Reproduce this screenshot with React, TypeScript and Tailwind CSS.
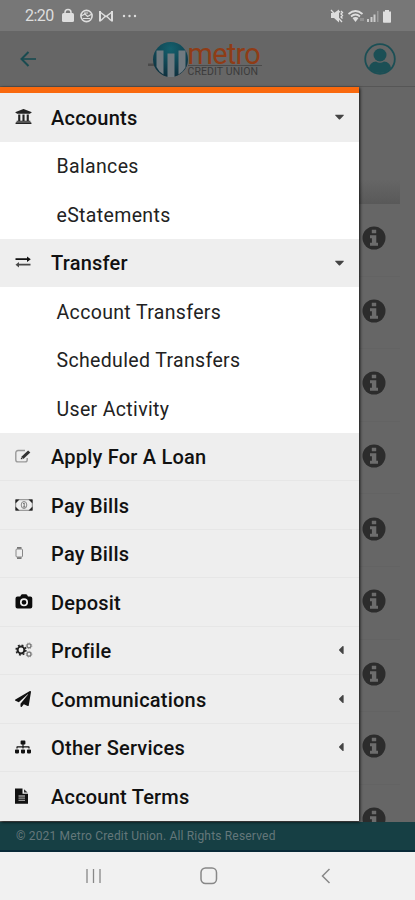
import React from "react";
import {
	FaCaretDown,
	FaCaretLeft,
	FaPaperPlane,
	FaSitemap,
	FaUniversity,
} from "react-icons/fa";
import clsx from "clsx";

interface MenuItem {
	label: string;
	icon?: React.ReactNode;
	caret?: 'down'|'left';
	sub?: boolean;
	line?: boolean;
}

const ExchangeIcon = () => (
	<svg width="17" height="14" viewBox="0 0 17 14" fill="currentColor">
		<path d="M.5 3.300h11.500V1.600L15.800 4.300 12 7V5.100H.5z" />
		<path d="M15.500 8.700H4V7L.5 9.700 4 12.400v-1.900h11.500z" opacity=".75" />
	</svg>
)

const EditIcon = () => (
	<svg width="17" height="15" viewBox="0 0 17 15" fill="none">
		<path d="M10 1.500H3A2.200 2.200 0 0 0 .8 3.700v7A2.200 2.200 0 0 0 3 12.900h7a2.200 2.200 0 0 0 2.200-2.200V9" stroke="#999" strokeWidth="1.400" />
		<path d="M5.800 10.300l.3-2.300 7-6.500 2.200 2-6.900 6.400z" fill="#333" />
		<path d="M6.500 8.300l1.500 1.500" stroke="#eee" strokeWidth=".9" />
	</svg>
)

const MoneyIcon = () => (
	<svg width="18" height="12" viewBox="0 0 18 12" fill="none">
		<path d="M.7.700h16.600v10.600H.7z" strokeWidth="1" stroke="#888" />
		<path d="M.5.500h4L.5 4.500zM17.500.500h-4l4 4zM.5 11.500h4l-4-4zM17.500 11.500h-4l4-4z" fill="#222" />
		<ellipse cx="9" cy="6" rx="2.800" ry="3.500" stroke="#888" />
		<path d="M8 4.700l1.200-.7v4M7.800 8h2.700" stroke="#666" strokeWidth=".9" />
	</svg>
)

const WatchIcon = () => (
	<svg width="10" height="14" viewBox="0 0 10 14" fill="none" stroke="#888">
		<rect x="1" y="3" width="6.500" height="8" rx="1" />
		<path d="M2 1.800h4.500M2 12.200h4.500" strokeWidth="1.800" stroke="#777" />
	</svg>
)

const CameraIcon = () => (
	<svg width="18" height="15" viewBox="0 0 18 15">
		<path d="M2.500 2.500h2.700L6.200.8Q6.500.300 7.200.300h3.800q.7 0 1 .5l1 1.700h2.300q2 0 2 2v8q0 2-2 2H2.500q-2 0-2-2v-8q0-2 2-2z" fill="#0b0b0b" />
		<circle cx="9" cy="8.300" r="3.200" fill="none" stroke="#eee" strokeWidth="1.700" />
	</svg>
)

const CogsIcon = () => (
	<svg width="18" height="16" viewBox="0 0 18 16" fill="none">
		<circle cx="6" cy="8" r="3.400" stroke="#222" strokeWidth="2" />
		<circle cx="6" cy="8" r="4.900" stroke="#222" strokeWidth="1.500" strokeDasharray="1.900 1.950" />
		<circle cx="14" cy="3.800" r="2" stroke="#777" strokeWidth="1.300" />
		<circle cx="14" cy="3.800" r="2.900" stroke="#888" strokeWidth=".8" strokeDasharray="1.100 1.180" />
		<circle cx="14" cy="12.200" r="2" stroke="#777" strokeWidth="1.300" />
		<circle cx="14" cy="12.200" r="2.900" stroke="#888" strokeWidth=".8" strokeDasharray="1.100 1.180" />
	</svg>
)

const DocIcon = () => (
	<svg width="14" height="16" viewBox="0 0 14 16">
		<path d="M0 .5h7.500v5.300h5.500v10H0z" fill="#111" />
		<path d="M9 1.200l3.600 3.400H9z" fill="#333" />
		<path d="M3.500 8h6.500M3.500 10.200h6.500M3.500 12.400h6.500" stroke="#999" strokeWidth="1.300" />
	</svg>
)

const InfoIcon = () => (
	<svg width="24" height="24" viewBox="0 0 24 24">
		<circle cx="12" cy="12" r="11.500" fill="#2c2c2c" />
		<path d="M9.800 3.700h4.400v3.600H9.800zM8 9.300h6.300v7.400H16v3H8v-3h1.900v-4.500H8z" fill="#6d6d6d" />
	</svg>
)

const items: MenuItem[] = [
	{ label: 'Accounts', icon: <FaUniversity size={17} color="#222" />, caret: 'down' },
	{ label: 'Balances', sub: true },
	{ label: 'eStatements', sub: true },
	{ label: 'Transfer', icon: <ExchangeIcon />, caret: 'down' },
	{ label: 'Account Transfers', sub: true },
	{ label: 'Scheduled Transfers', sub: true },
	{ label: 'User Activity', sub: true },
	{ label: 'Apply For A Loan', icon: <EditIcon />, line: true },
	{ label: 'Pay Bills', icon: <MoneyIcon />, line: true },
	{ label: 'Pay Bills', icon: <WatchIcon />, line: true },
	{ label: 'Deposit', icon: <CameraIcon />, line: true },
	{ label: 'Profile', icon: <CogsIcon />, caret: 'left', line: true },
	{ label: 'Communications', icon: <FaPaperPlane size={16} />, caret: 'left', line: true },
	{ label: 'Other Services', icon: <FaSitemap size={16} />, caret: 'left', line: true },
	{ label: 'Account Terms', icon: <DocIcon /> },
];

const StatusBar = () => (
	<div className="h-[31px] shrink-0 bg-[#777] text-[#dedede] flex items-center justify-between pl-[25px] pr-[23px]">
		<div className="flex items-center">
			<div className="text-[16px] leading-none tracking-[-0.5px] w-[36px]">2:20</div>
			<svg width="77" height="16" viewBox="0 0 77 16" fill="none" stroke="currentColor">
				<rect x="1" y="5" width="12" height="9" rx="1.500" fill="currentColor" stroke="none" />
				<path d="M4 6V4.500a3 3 0 0 1 6 0V6" strokeWidth="1.500" />
				<circle cx="25.500" cy="8" r="5.600" strokeWidth="1.600" />
				<path d="M20 8l4-2 2.500 2.500L31 6M22 10.500h7M23 5h4" strokeWidth="1.200" />
				<path d="M39 13.500V3M51 13.500V3" strokeWidth="2" />
				<path d="M39 4l6 4.500L51 4M40 12.500l4-4M50 12.500l-4-4" strokeWidth="1.400" />
				<circle cx="63" cy="8" r="1.200" fill="currentColor" stroke="none" />
				<circle cx="68.500" cy="8" r="1.200" fill="currentColor" stroke="none" />
				<circle cx="74" cy="8" r="1.200" fill="currentColor" stroke="none" />
			</svg>
		</div>
		<svg width="62" height="16" viewBox="0 0 62 16" fill="currentColor">
			<path d="M1 5h3l5-3.500v13L4 10H1z" />
			<path d="M1 2l11 12M11 3l1.500 1.500L11 6l1.500 1.500L11 9l1.500 1.500M9 3l1 1.500" fill="none" stroke="currentColor" strokeWidth="1.300" />
			<path d="M18.500 6q7-6 14 0M21 8.500q4.500-4 9 0" fill="none" stroke="currentColor" strokeWidth="1.700" />
			<path d="M22.500 10q3-2 6 0l-3 4z" />
			<path d="M31 13v-3M33 10v3" stroke="#aaa" />
			<path d="M37 11h2v3h-2zM40.500 9h2v5h-2zM43.500 6.500h2V14h-2z" opacity=".8" />
			<path d="M47 3h1.500v11H47z" opacity=".35" />
			<path d="M53 3.500h2V2h4v1.500h2V14a.8.8 0 0 1-.8.800h-6.400A.8.8 0 0 1 53 14z" />
		</svg>
	</div>
)

const Logo = () => (
	<div className="flex items-center">
		<svg width="40" height="37" viewBox="0 0 40 37">
			<defs>
				<radialGradient id="globe" cx=".5" cy=".2" r=".8">
					<stop offset="0" stopColor="#14606d" />
					<stop offset="1" stopColor="#0e303e" />
				</radialGradient>
			</defs>
			<path d="M0 22.500h8v2.500H0z" fill="#4a4a4a" />
			<circle cx="22.500" cy="18.500" r="17.500" fill="url(#globe)" />
			<path d="M8.500 9.500H15.500V33.500l-4-3-3-4.500zM19.500 12.500h7V36h-7zM30.500 9.500h7v17l-3 4-4 3z" fill="#707a80" />
		</svg>
		<div className="w-[74px] h-[37px] pt-[2px] flex flex-col">
			<div className="text-[#8f3c16] text-[29px] leading-[22px] h-[22px] tracking-[-0.8px] whitespace-nowrap">metro</div>
			<div className="border-t border-[#4b4b4b] text-[#3b3b3b] text-[10.500px] leading-[12px] h-[12px] tracking-[0.1px] whitespace-nowrap">CREDIT UNION</div>
		</div>
	</div>
)

const Header = () => (
	<div className="h-[56px] shrink-0 bg-[#666] border-b border-[#565656] flex items-center justify-between pl-[20px] pr-[19px]">
		<svg width="17" height="16" viewBox="0 0 17 16" fill="none" stroke="#194b50" strokeWidth="2">
			<path d="M8.500 1L1.500 8l7 7" />
			<path d="M2 8h14" strokeWidth="1.600" />
		</svg>
		<div className="ml-[8px] mt-[2px]"><Logo /></div>
		<svg width="32" height="32" viewBox="0 0 32 32" fill="#1b4f55">
			<circle cx="16" cy="16" r="14.800" fill="none" stroke="#1b4f55" strokeWidth="1.800" />
			<circle cx="16" cy="12" r="6.500" />
			<path d="M5 25q1-6 7-6.500 4 2.500 8 0 6 .5 7 6.500-4 5-11 5T5 25z" />
		</svg>
	</div>
)

const AccountList = () => (
	<div className="flex-1 min-h-0 overflow-hidden bg-[#666] pt-[92px]">
		<div className="h-[25px] mr-[15px] bg-linear-to-b from-[#666] to-[#595959]" />
		{Array.from({ length: 9 }).map((_, i) => (
			<div key={i} className="h-[72.6px] mr-[15px] border-b border-[#636363] flex justify-end pt-[22.2px] pr-[14px]">
				<InfoIcon />
			</div>
		))}
	</div>
)

const MenuRow = ({ item }: { item: MenuItem }) => {
	if (item.sub) {
		return (
			<div className="h-[48.5px] bg-white pl-[56.5px] pt-[2px] flex items-center text-[19.5px] tracking-[0.35px] text-[#222]">
				{item.label}
			</div>
		)
	}
	return (
		<div className={clsx("h-[48.5px] bg-[#eee] pl-[15px] pr-[15px] flex items-center text-[#111] border-b", item.line ? 'border-[#e6e6e6]' : 'border-[#eee]')}>
			<div className="w-[36px] shrink-0">{item.icon}</div>
			<div className="flex-1 pt-[2px] text-[20px] font-medium tracking-[0.22px]">{item.label}</div>
			{item.caret === 'down' && <FaCaretDown size={15} color="#444" className="mr-[-3px]" />}
			{item.caret === 'left' && <FaCaretLeft size={14} color="#444" className="mr-[-4px]" />}
		</div>
	)
}

const App: React.FC = () => {
	return (
		<div className="relative w-[415px] h-[900px] overflow-hidden flex flex-col font-['Roboto',sans-serif]">
			<StatusBar />
			<Header />
			<AccountList />
			<div className="h-[30px] shrink-0 bg-[#163f44] border-b-2 border-[#082a38] pl-[16px] flex items-center text-[12px] tracking-[0.18px] text-[#64777a]">
				© 2021 Metro Credit Union. All Rights Reserved
			</div>
			<div className="h-[48px] shrink-0 bg-[#f1f1f1] flex items-center justify-between pl-[86px] pr-[84px] text-[#888]">
				<svg width="16" height="16" viewBox="0 0 16 16" stroke="currentColor" strokeWidth="1.300">
					<path d="M1 1v14M7.500 1v14M14 1v14" />
				</svg>
				<svg width="18" height="18" viewBox="0 0 18 18" fill="none" stroke="currentColor" strokeWidth="1.500" className="mr-[5px]">
					<rect x="1" y="1" width="15.500" height="15.500" rx="4.500" />
				</svg>
				<svg width="10" height="16" viewBox="0 0 10 16" fill="none" stroke="currentColor" strokeWidth="1.500">
					<path d="M8.500 1L1.500 8l7 7" />
				</svg>
			</div>
			<div className="absolute left-0 top-[87px] w-[359px] border-t-[6px] border-[#f9690e] shadow-[1px_1px_3px_rgba(0,0,0,0.8)]">
				{items.map((item, i) => <MenuRow key={i} item={item} />)}
			</div>
		</div>
	)
}

export default App;
